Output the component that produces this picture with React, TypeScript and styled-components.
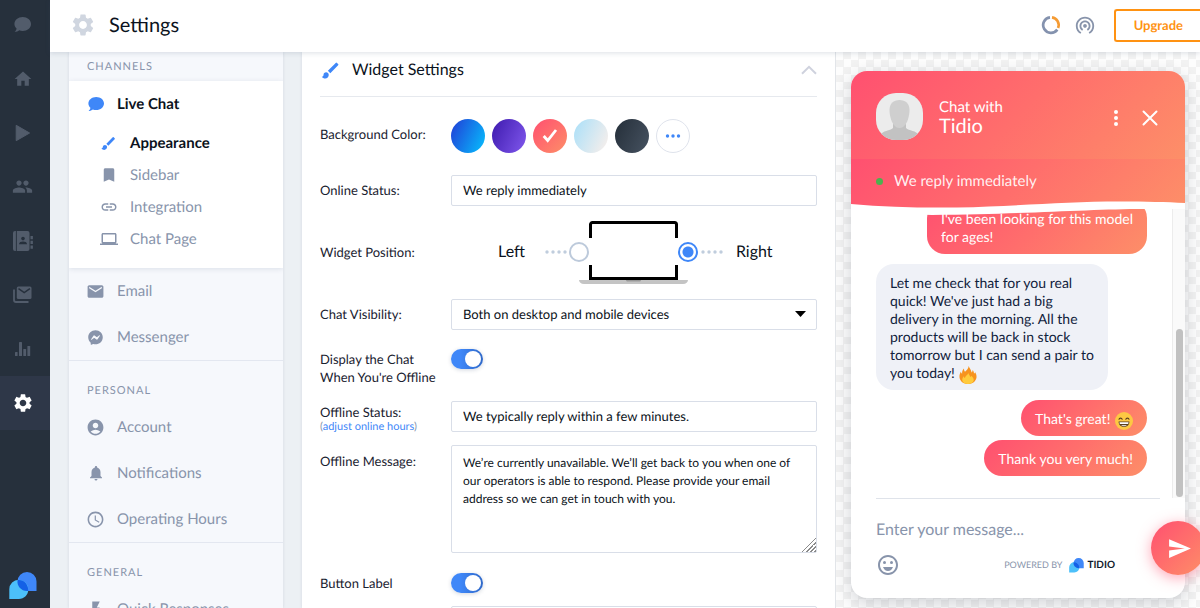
import React, { useState } from 'react';
import styled, { createGlobalStyle, css } from 'styled-components';
import {
  MdHome,
  MdPeople,
  MdSettings,
  MdBrush,
  MdBookmark,
  MdLink,
  MdLaptop,
  MdEmail,
  MdAccountCircle,
  MdNotifications,
  MdAccessTime,
  MdFlashOn,
  MdWifiTethering,
  MdSend,
  MdSentimentVerySatisfied,
} from 'react-icons/md';
import { FaFacebookMessenger } from 'react-icons/fa';

const color = {
  ink: '#0b1220',
  text: '#1a2230',
  muted: '#8894ab',
  blue: '#3f87f8',
  line: '#d9dee8',
  rail: '#26303c',
  railActive: '#2e3748',
  railIcon: '#525c6b',
  page: '#ecf0f4',
  orange: '#ff9212',
};
const coral = 'linear-gradient(135deg, #ff5070 0%, #ff6e6c 50%, #fd8f68 100%)';

const GlobalStyle = createGlobalStyle`
  *, *::before, *::after { box-sizing: border-box; }
  body {
    margin: 0;
    background: ${color.page};
    color: ${color.ink};
    font-family: Lato, "Liberation Sans", sans-serif;
    text-rendering: geometricPrecision;
    overflow: hidden;
  }
  button, input, select, textarea {
    font: inherit;
    color: inherit;
    text-rendering: inherit;
  }
  button { cursor: pointer; }
`;

/* ---------- Shell ---------- */

const Shell = styled.div`
  display: flex;
  height: 100vh;
  overflow: hidden;
`;

const Rail = styled.nav`
  display: flex;
  flex-direction: column;
  flex: 0 0 50px;
  background: ${color.rail};
`;

const RailList = styled.div`
  flex: 1;
  margin-top: -2px;
`;

const RailLink = styled.a<{ $active?: boolean }>`
  display: flex;
  align-items: center;
  justify-content: center;
  height: 54px;
  padding: 0 5px 1px 0;
  color: ${p => (p.$active ? '#fff' : color.railIcon)};
  background: ${p => (p.$active ? color.railActive : 'transparent')};
`;

const RailLogo = styled.a`
  display: flex;
  padding: 0 0 8px 9px;
`;

const Main = styled.div`
  display: flex;
  flex: 1;
  flex-direction: column;
  min-width: 0;
`;

const TopBar = styled.header`
  position: relative;
  z-index: 2;
  display: flex;
  align-items: center;
  flex: 0 0 52px;
  padding: 0 0 2px 20px;
  background: #fff;
  box-shadow: 0 1px 5px rgba(60, 75, 110, 0.18);
`;

const PageTitle = styled.h1`
  flex: 1;
  margin: 0 0 0 13px;
  font-size: 20px;
  line-height: 24px;
  font-weight: 400;
`;

const IconButton = styled.button`
  display: flex;
  padding: 0;
  border: 0;
  background: none;
  color: ${color.muted};
`;

const TopActions = styled.div`
  display: flex;
  align-items: center;
  gap: 13px;
`;

const UpgradeButton = styled.button`
  height: 33px;
  margin-left: 5px;
  padding: 0 17px 0 18px;
  border: 2px solid ${color.orange};
  border-right: 0;
  border-radius: 3px 0 0 3px;
  background: #fff;
  color: ${color.orange};
  font-size: 13px;
  font-weight: 700;
`;

const Content = styled.div`
  display: flex;
  flex: 1;
  min-height: 0;
  padding-left: 19px;
`;

/* ---------- Channel menu ---------- */

const Menu = styled.aside`
  flex: 0 0 214px;
  margin-right: 19px;
  overflow: hidden;
  background: #f6f8fc;
  box-shadow: 0 0 3px rgba(60, 75, 110, 0.14);
`;

const MenuGroup = styled.section`
  border-bottom: 1px solid #e3e7f0;
`;

const MenuTitle = styled.h2<{ $first?: boolean }>`
  margin: 0;
  padding: ${p => (p.$first ? '8px 18px 7px' : '23px 18px 6px')};
  color: ${color.muted};
  font-size: 11px;
  line-height: 14px;
  font-weight: 400;
  letter-spacing: 1px;
`;

const MenuOpen = styled.div`
  padding-bottom: 13px;
  background: #fff;
  box-shadow: 0 1px 5px rgba(60, 75, 110, 0.14);
`;

const MenuLink = styled.a<{ $sub?: boolean; $active?: boolean }>`
  display: flex;
  align-items: center;
  height: ${p => (p.$sub ? '32px' : '46px')};
  padding-left: ${p => (p.$sub ? '30px' : '17px')};
  gap: 12px;
  color: ${p => (p.$active ? color.ink : color.muted)};
  font-size: 15px;
  line-height: 20px;
  font-weight: ${p => (p.$active ? 700 : 400)};
  text-decoration: none;
  white-space: nowrap;

  svg {
    flex: none;
    color: ${p => (p.$active ? color.blue : color.muted)};
  }
`;

const IconSlot = styled.span`
  display: flex;
  justify-content: center;
  flex: 0 0 19px;
`;

/* ---------- Settings form ---------- */

const Panel = styled.main`
  flex: 1;
  min-width: 0;
  padding: 0 18px;
  overflow: hidden;
  background: #fff;
  box-shadow: 0 0 3px rgba(60, 75, 110, 0.14);
`;

const PanelHead = styled.div`
  display: flex;
  align-items: center;
  height: 45px;
  padding-bottom: 8px;
  border-bottom: 1px solid #e6e9ee;
`;

const PanelTitle = styled.h2`
  flex: 1;
  margin: 0 0 0 11px;
  font-size: 16px;
  line-height: 20px;
  font-weight: 400;
`;

const Row = styled.div<{ $gap: number }>`
  display: grid;
  grid-template-columns: 131px 1fr;
  align-items: start;
  margin-top: ${p => p.$gap}px;
`;

const Label = styled.label<{ $top: number }>`
  display: block;
  padding-top: ${p => p.$top}px;
  color: ${color.text};
  font-size: 13px;
  line-height: 18px;
  white-space: pre-line;
`;

const LabelNote = styled.div`
  color: ${color.muted};
  font-size: 11px;
  line-height: 12px;

  a {
    color: ${color.blue};
    text-decoration: none;
  }
`;

const Swatches = styled.div`
  display: flex;
  gap: 7px;
`;

const Swatch = styled.button<{ $fill?: string }>`
  display: flex;
  align-items: center;
  justify-content: center;
  width: 34px;
  height: 34px;
  padding: 0;
  border: ${p => (p.$fill ? '0' : '1px solid #dfe3ec')};
  border-radius: 50%;
  background: ${p => p.$fill ?? '#fff'};
`;

const field = css`
  display: block;
  width: 100%;
  border: 1px solid ${color.line};
  border-radius: 2px;
  background: #fff;
  color: ${color.ink};
  font-size: 13px;
  line-height: 18px;
  outline: none;
`;

const TextInput = styled.input`
  ${field}
  height: 31px;
  padding: 0 11px 1px;
`;

const TextArea = styled.textarea`
  ${field}
  height: 108px;
  padding: 8px 11px;
  font-size: 12px;
  resize: vertical;

  &::-webkit-resizer {
    background: linear-gradient(
      135deg,
      transparent 50%,
      #8a8a8a 50%, #8a8a8a 56%, transparent 56%, transparent 64%,
      #8a8a8a 64%, #8a8a8a 70%, transparent 70%, transparent 78%,
      #8a8a8a 78%, #8a8a8a 84%, transparent 84%, transparent 92%,
      #8a8a8a 92%
    );
  }
`;

const SelectWrap = styled.div`
  position: relative;

  svg {
    position: absolute;
    top: 12px;
    right: 11px;
    pointer-events: none;
  }
`;

const Select = styled.select`
  ${field}
  height: 31px;
  padding: 0 11px 1px;
  appearance: none;
`;

const Toggle = styled.input`
  display: flex;
  align-items: center;
  justify-content: flex-end;
  width: 32px;
  height: 20px;
  margin: 0;
  padding: 0 2px;
  appearance: none;
  border-radius: 10px;
  background: linear-gradient(90deg, #3f87f8 30%, #2f68c8 100%);
  box-shadow: 0 1px 4px rgba(30, 50, 90, 0.2);
  cursor: pointer;

  &::before {
    content: '';
    width: 16px;
    height: 16px;
    border-radius: 50%;
    background: #fff;
  }

  &:not(:checked) {
    justify-content: flex-start;
    background: #c3cddb;
  }
`;

const Position = styled.div`
  display: flex;
  align-items: center;
  height: 63px;
  padding-left: 47px;
`;

const Side = styled.label`
  display: flex;
  align-items: center;
  padding-bottom: 2px;
  font-size: 16px;
  line-height: 20px;
`;

const Dots = styled.svg<{ $side: 'left' | 'right' }>`
  margin: ${p => (p.$side === 'left' ? '0 2px 0 20px' : '0 13px 0 3px')};
`;

const Radio = styled.input`
  width: 20px;
  height: 20px;
  margin: 0;
  appearance: none;
  border: 2px solid #bdcadb;
  border-radius: 50%;
  background: #fff;

  &:checked {
    border-color: ${color.blue};
    background: radial-gradient(circle, ${color.blue} 5px, #fff 6px);
  }
`;

const LaptopArt = styled.svg`
  overflow: visible;
`;

/* ---------- Chat preview ---------- */

const Preview = styled.section`
  flex: 0 0 365px;
  padding: 19px 15px 10px;
  overflow: hidden;
  border-left: 1px solid #e2e5e9;
  background: repeating-conic-gradient(#f2f2f2 0 25%, #fdfdfd 0 50%) 0 0 / 15px 15px;
`;

const Widget = styled.div`
  position: relative;
  display: flex;
  flex-direction: column;
  height: 100%;
  border-radius: 16px;
  background: #fff;
  box-shadow: 0 5px 18px rgba(30, 40, 60, 0.2);
`;

const ChatHead = styled.div`
  display: flex;
  align-items: center;
  flex: 0 0 88px;
  padding: 2px 27px 0 25px;
  border-radius: 16px 16px 0 0;
  background: ${coral};
  color: #fff;
`;

const Avatar = styled.svg`
  flex: none;
  border-radius: 20px;
`;

const ChatName = styled.div`
  flex: 1;
  padding-top: 2px;
  margin-left: 16px;
  font-size: 15px;
  line-height: 18px;

  strong {
    display: block;
    font-size: 20px;
    line-height: 21px;
    font-weight: 400;
  }
`;

const HeadActions = styled.div`
  display: flex;
  align-items: center;
  gap: 24px;
  padding-top: 4px;
`;

const HeadButton = styled(IconButton)`
  color: #fff;
`;

const ChatStatus = styled.div`
  position: relative;
  display: flex;
  align-items: center;
  flex: 0 0 50px;
  padding: 0 0 6px 25px;
  gap: 11px;
  background: ${coral};
  color: rgba(255, 255, 255, 0.92);
  font-size: 15px;
  line-height: 20px;
`;

const OnlineDot = styled.span`
  width: 7px;
  height: 7px;
  border-radius: 50%;
  background: #4cb14f;
`;

const Wave = styled.svg`
  position: absolute;
  left: 0;
  bottom: -7px;
  z-index: 1;
  width: 100%;
  height: 16px;
`;

const Feed = styled.div`
  display: flex;
  flex: 1;
  min-height: 0;
`;

const Messages = styled.div`
  display: flex;
  flex: 1;
  flex-direction: column;
  justify-content: flex-end;
  padding: 0 25px 22px;
  overflow: hidden;
`;

const Bubble = styled.p<{ $mine?: boolean; $gap?: number }>`
  flex: none;
  align-self: ${p => (p.$mine ? 'flex-end' : 'flex-start')};
  margin: ${p => p.$gap ?? 10}px 0 0;
  padding: 10px 14px 8px;
  border-radius: 18px;
  background: ${p => (p.$mine ? coral : '#eff1f7')};
  color: ${p => (p.$mine ? '#fff' : '#10213c')};
  font-size: 14px;
  line-height: 18px;
  white-space: pre;

  svg {
    margin: -2px 0 -2px 1px;
    vertical-align: -4px;
  }
`;

const ScrollTrack = styled.div`
  display: flex;
  align-items: flex-end;
  flex: 0 0 13px;
  padding: 0 2px 1px 3px;
  border-left: 1px solid #ececec;
  background: #fafafa;
`;

const ScrollThumb = styled.div`
  width: 7px;
  height: 168px;
  border-radius: 4px;
  background: #c1c1c1;
`;

const Compose = styled.div`
  flex: 0 0 100px;
  margin: 0 25px;
  border-top: 1px solid #dfe3ea;
`;

const ComposeInput = styled.input`
  display: block;
  width: 100%;
  height: 24px;
  margin: 18px 0 0;
  padding: 0;
  border: 0;
  outline: none;
  background: none;
  font-size: 16px;
  line-height: 20px;

  &::placeholder {
    color: ${color.muted};
    opacity: 1;
  }
`;

const ComposeFoot = styled.div`
  display: flex;
  align-items: center;
  justify-content: space-between;
  height: 24px;
  margin: 12px 45px 0 0;
`;

const Powered = styled.a`
  display: flex;
  align-items: center;
  gap: 7px;
  color: ${color.muted};
  font-size: 9px;
  line-height: 14px;
  text-decoration: none;

  strong {
    margin-left: -4px;
    color: #0f1a2a;
    font-size: 10px;
  }
`;

const SendButton = styled.button`
  position: absolute;
  right: -20px;
  bottom: 23px;
  display: flex;
  align-items: center;
  justify-content: center;
  width: 54px;
  height: 54px;
  padding: 0 0 0 2px;
  border: 0;
  border-radius: 50%;
  background: ${coral};
  box-shadow: 0 3px 14px rgba(255, 80, 112, 0.5);
  color: #fff;
`;

/* ---------- Drawings ---------- */

const ChatGlyph = ({ width = 16 }: { width?: number }) => (
  <svg width={width} height={Math.round(width * 0.875)} viewBox="0 0 16 14" fill="currentColor">
    <path d="M8.2 0C3.9 0 .4 2.9.4 6.500c0 1.700.8 3.200 2 4.300C2.300 12 1.600 13.100.6 14c1.700 0 3.200-.6 4.300-1.500 1 .4 2.100.6 3.300.6 4.300 0 7.800-2.900 7.800-6.600S12.500 0 8.200 0z" />
  </svg>
);

const PlayGlyph = () => (
  <svg width="16" height="18" viewBox="0 0 16 18" fill="currentColor">
    <path d="M1.200 1.300 14.600 9 1.200 16.700z" stroke="currentColor" strokeWidth="1" strokeLinejoin="round" />
  </svg>
);

const ContactsGlyph = () => (
  <svg width="20" height="20" viewBox="0 0 20 20">
    <rect width="16.500" height="20" rx="2" fill="currentColor" />
    <path d="M3.400 0v20" stroke={color.rail} strokeWidth=".9" />
    <circle cx="10" cy="7.600" r="1.800" fill={color.rail} />
    <path d="M6 13.200c0-2.200 2-2.800 4-2.800s4 .6 4 2.800z" fill={color.rail} />
    <path d="M18.700 5v3.300M18.700 9.700V13M18.700 14.400v3.300" stroke="currentColor" strokeWidth="2.400" />
  </svg>
);

const MailStackGlyph = () => (
  <svg width="19" height="17" viewBox="0 0 19 17">
    <path d="M1 3.500V14a2 2 0 0 0 2 2h12.500" fill="none" stroke="currentColor" strokeWidth="1.800" />
    <rect x="3.800" y=".5" width="14.700" height="12.500" rx="1.500" fill="currentColor" />
    <path d="m5.500 2.600 5.700 4 5.700-4" fill="none" stroke={color.rail} strokeWidth="1.500" />
  </svg>
);

const BarsGlyph = () => (
  <svg width="17" height="14" viewBox="0 0 17 14" fill="currentColor">
    <rect x="1" y="10" width="2.600" height="4" rx=".6" />
    <rect x="5" y="0" width="3" height="14" rx=".6" />
    <rect x="9.300" y="7" width="2.800" height="7" rx=".6" />
    <rect x="13.400" y="4" width="2.800" height="10" rx=".6" />
  </svg>
);

const TidioLogo = ({ size }: { size: number }) => (
  <svg width={size} height={size} viewBox="0 0 28 28">
    <path d="M8.500 9.500a9.500 9.500 0 0 1 19 0V19H18A9.500 9.500 0 0 1 8.500 9.500z" fill="#3f87f8" />
    <path d="M.3 17.300a9.500 9.500 0 0 1 19 0c0 5.600-4 9.700-9.500 9.700H.3z" fill="#4cc0fa" />
    <path d="M8.600 8c6-.9 10.800 3.700 10.700 11H18C12.200 19 7.500 14 8.600 8z" fill="#1460e6" />
  </svg>
);

const UsageGlyph = () => (
  <svg width="20" height="20" viewBox="0 0 20 20" fill="none" strokeWidth="2.700">
    <path d="M9 2.300a7.800 7.800 0 1 0 7.300 12.300" stroke="#8492ae" />
    <path d="M11 2.300a7.800 7.800 0 0 1 6.100 10.600" stroke="#f59b33" />
  </svg>
);

const DotRow = () => (
  <>
    {[2, 8, 14, 20].map(x => (
      <circle key={x} cx={x} cy="2" r="1.700" fill="#c0cddd" />
    ))}
  </>
);

const FireEmoji = () => (
  <svg width="18" height="18" viewBox="0 0 18 18">
    <path d="M9.700 0c.5 2.300 2.700 3.700 2.900 6.500.8-.6 1-1.500.9-2.400 1.200 1 1.400 2.200 1.500 3.400.8-.2 1-.9 1-1.600 1 1.400 1.800 3.400 1.500 5.600C17 15.300 13.500 18 9 18S1 15.300.5 11.500C.2 9 1 7 2 5.500c0 1 .3 1.900 1.100 2.200C3 5.500 3.600 3.600 5 2.500c0 1.300.2 2.500 1 3.200C7.800 4.300 9.400 2.600 9.700 0z" fill="#f7931e" />
    <path d="M9.300 7c.3 1.600 1.900 2.400 1.900 4.100.6-.3.9-.8.9-1.400 1.700 1.500 3 2.900 2.600 4.900C14.200 16.700 12 18 9 18s-5.300-1.300-5.700-3.500c-.3-1.900.7-3.100 1.500-4.200.1.900.4 1.500 1.100 1.700C6 9.900 8.700 9.200 9.300 7z" fill="#ffcb3d" />
  </svg>
);

const GrinEmoji = () => (
  <svg width="18" height="18" viewBox="0 0 18 18">
    <circle cx="9" cy="9" r="9" fill="#fdc843" />
    <path d="M4 7.300c.3-1.600 2.800-1.600 3.200 0M10.800 7.300c.4-1.600 2.900-1.600 3.200 0" fill="none" stroke="#5c4020" strokeWidth="1.100" strokeLinecap="round" />
    <path d="M3.600 9.600h10.800c0 3.400-2.200 5.400-5.400 5.400s-5.400-2-5.400-5.400z" fill="#5c4020" />
    <path d="M4.500 10.300h9c0 .8-.1 1.200-.4 1.700H4.900c-.3-.5-.4-.9-.4-1.700zM6 13.200h6c-.8.700-1.800 1-3 1s-2.200-.3-3-1z" fill="#fff" />
  </svg>
);

const PersonAvatar = () => (
  <Avatar width="47" height="47" viewBox="0 0 47 47">
    <rect width="47" height="47" fill="#ececec" />
    <path d="M17 30h13v5c3 3 10 2 14 8v4H3v-4c4-6 11-5 14-8z" fill="#c2c2c2" />
    <path d="M23.500 7c6 0 10 3.500 10 10 0 5-1.500 11-4 14.500-1.800 2.500-3.700 3.500-6 3.500s-4.200-1-6-3.500c-2.500-3.500-4-9.500-4-14.500 0-6.500 4-10 10-10z" fill="#cfcfcf" />
  </Avatar>
);

/* ---------- Data ---------- */

const railItems = [
  { name: 'Chat', icon: <ChatGlyph width={17} /> },
  { name: 'Home', icon: <MdHome size={20} /> },
  { name: 'Visitors', icon: <PlayGlyph /> },
  { name: 'People', icon: <MdPeople size={21} /> },
  { name: 'Contacts', icon: <ContactsGlyph /> },
  { name: 'Mailing', icon: <MailStackGlyph /> },
  { name: 'Analytics', icon: <BarsGlyph /> },
  { name: 'Settings', icon: <MdSettings size={22} />, active: true },
];

const liveChatItems = [
  { name: 'Appearance', icon: <MdBrush size={17} />, active: true },
  { name: 'Sidebar', icon: <MdBookmark size={18} /> },
  { name: 'Integration', icon: <MdLink size={18} /> },
  { name: 'Chat Page', icon: <MdLaptop size={18} /> },
];

const channelItems = [
  { name: 'Email', icon: <MdEmail size={19} /> },
  { name: 'Messenger', icon: <FaFacebookMessenger size={15} /> },
];

const personalItems = [
  { name: 'Account', icon: <MdAccountCircle size={19} /> },
  { name: 'Notifications', icon: <MdNotifications size={18} /> },
  { name: 'Operating Hours', icon: <MdAccessTime size={19} /> },
];

const swatches = [
  { name: 'Blue', fill: 'linear-gradient(115deg, #2042d8 5%, #08b4fa 90%)' },
  { name: 'Purple', fill: 'linear-gradient(115deg, #4420b4 10%, #7d55ea 95%)' },
  { name: 'Coral', fill: coral },
  { name: 'Ice', fill: 'linear-gradient(115deg, #ade0f8 5%, #f3eeec 90%)' },
  { name: 'Graphite', fill: 'linear-gradient(115deg, #28323d 10%, #45515f 95%)' },
];

type Item = { name: string; icon: React.ReactNode; active?: boolean };

const Links = ({ items, sub }: { items: Item[]; sub?: boolean }) => (
  <>
    {items.map(item => (
      <MenuLink key={item.name} href="#" $sub={sub} $active={item.active}>
        <IconSlot>{item.icon}</IconSlot>
        {item.name}
      </MenuLink>
    ))}
  </>
);

/* ---------- Sections ---------- */

const ChannelMenu = () => (
  <Menu>
    <MenuGroup>
      <MenuTitle $first>CHANNELS</MenuTitle>
      <MenuOpen>
        <Links items={[{ name: 'Live Chat', icon: <ChatGlyph />, active: true }]} />
        <Links items={liveChatItems} sub />
      </MenuOpen>
      <Links items={channelItems} />
    </MenuGroup>
    <MenuGroup>
      <MenuTitle>PERSONAL</MenuTitle>
      <Links items={personalItems} />
    </MenuGroup>
    <MenuGroup>
      <MenuTitle>GENERAL</MenuTitle>
      <Links items={[{ name: 'Quick Responses', icon: <MdFlashOn size={18} /> }]} />
    </MenuGroup>
  </Menu>
);

const WidgetSettings = () => {
  const [picked, setPicked] = useState('Coral');
  return (
    <Panel>
      <PanelHead>
        <MdBrush size={21} color={color.blue} />
        <PanelTitle>Widget Settings</PanelTitle>
        <IconButton aria-label="Collapse">
          <svg width="16" height="10" viewBox="0 0 16 10" fill="none" stroke="#cfd2de" strokeWidth="2">
            <path d="m1 8.800 7-7 7 7" />
          </svg>
        </IconButton>
      </PanelHead>

      <Row $gap={22}>
        <Label as="span" $top={6}>Background Color:</Label>
        <Swatches>
          {swatches.map(s => (
            <Swatch key={s.name} $fill={s.fill} aria-label={s.name} onClick={() => setPicked(s.name)}>
              {picked === s.name && (
                <svg width="16" height="14" viewBox="0 0 16 14" fill="none" stroke="#fff" strokeWidth="2.800">
                  <path d="m1.700 7 4 4.500L14 1" />
                </svg>
              )}
            </Swatch>
          ))}
          <Swatch aria-label="More colors">
            <svg width="16" height="4" viewBox="0 0 16 4" fill={color.blue}>
              <circle cx="2.500" cy="2" r="1.700" />
              <circle cx="8" cy="2" r="1.700" />
              <circle cx="13.500" cy="2" r="1.700" />
            </svg>
          </Swatch>
        </Swatches>
      </Row>

      <Row $gap={22}>
        <Label $top={6} htmlFor="online">Online Status:</Label>
        <TextInput id="online" defaultValue="We reply immediately" />
      </Row>

      <Row $gap={15}>
        <Label as="span" $top={22}>Widget Position:</Label>
        <Position>
          <Side>
            Left
            <Dots $side="left" width="22" height="4"><DotRow /></Dots>
            <Radio type="radio" name="position" />
          </Side>
          <LaptopArt width="89" height="63" viewBox="0 0 89 63">
            <path d="M1.500 17V3.500a2 2 0 0 1 2-2h82a2 2 0 0 1 2 2V17" fill="none" stroke="#000" strokeWidth="3" />
            <path d="M1.500 44v13.500h86V44" fill="none" stroke="#000" strokeWidth="3" />
            <path d="M-10 59H99c0 2-2 4-5 4H-5c-3 0-5-2-5-4z" fill="#c4c4c4" />
            <path d="M37 59h15c0 1-1 1.500-2 1.500H39c-1 0-2-.5-2-1.500z" fill="#999" />
          </LaptopArt>
          <Side>
            <Radio type="radio" name="position" defaultChecked />
            <Dots $side="right" width="22" height="4"><DotRow /></Dots>
            Right
          </Side>
        </Position>
      </Row>

      <Row $gap={15}>
        <Label $top={6} htmlFor="visibility">Chat Visibility:</Label>
        <SelectWrap>
          <Select id="visibility">
            <option>Both on desktop and mobile devices</option>
          </Select>
          <svg width="11" height="6" viewBox="0 0 11 6"><path d="M0 0h11L5.500 6z" fill="#000" /></svg>
        </SelectWrap>
      </Row>

      <Row $gap={19}>
        <Label $top={1} htmlFor="display">{"Display the Chat\nWhen You're Offline"}</Label>
        <Toggle id="display" type="checkbox" defaultChecked />
      </Row>

      <Row $gap={15}>
        <div>
          <Label $top={2} htmlFor="offline">Offline Status:</Label>
          <LabelNote>(<a href="#">adjust online hours</a>)</LabelNote>
        </div>
        <TextInput id="offline" defaultValue="We typically reply within a few minutes." />
      </Row>

      <Row $gap={12}>
        <Label $top={7} htmlFor="message">Offline Message:</Label>
        <TextArea
          id="message"
          defaultValue="We’re currently unavailable. We’ll get back to you when one of our operators is able to respond. Please provide your email address so we can get in touch with you."
        />
      </Row>

      <Row $gap={20}>
        <Label $top={1} htmlFor="button-label">Button Label</Label>
        <Toggle id="button-label" type="checkbox" defaultChecked />
      </Row>

      <Row $gap={13}>
        <span />
        <TextInput aria-label="Button label text" />
      </Row>
    </Panel>
  );
};

const ChatPreview = () => (
  <Preview>
    <Widget>
      <ChatHead>
        <PersonAvatar />
        <ChatName>
          Chat with
          <strong>Tidio</strong>
        </ChatName>
        <HeadActions>
          <HeadButton aria-label="More">
            <svg width="4" height="16" viewBox="0 0 4 16" fill="currentColor">
              <circle cx="2" cy="2" r="2" />
              <circle cx="2" cy="8" r="2" />
              <circle cx="2" cy="14" r="2" />
            </svg>
          </HeadButton>
          <HeadButton aria-label="Close">
            <svg width="16" height="16" viewBox="0 0 16 16" stroke="currentColor" strokeWidth="2" strokeLinecap="round">
              <path d="m1.500 1.500 13 13M14.500 1.500l-13 13" />
            </svg>
          </HeadButton>
        </HeadActions>
      </ChatHead>
      <ChatStatus>
        <OnlineDot />
        We reply immediately
        <Wave viewBox="0 0 334 16" preserveAspectRatio="none">
          <path d="M0 4C35 7 70 8 106 7.500 170 6 215 1.500 269 1.500c26 0 46 .5 65 1.500v6h-42C240 9 180 14 81 15L0 12z" fill="#fff" />
        </Wave>
      </ChatStatus>
      <Feed>
        <Messages>
          <Bubble $mine>{"I've been looking for this model\nfor ages!"}</Bubble>
          <Bubble>
            {"Let me check that for you real\nquick! We've just had a big\ndelivery in the morning. All the\nproducts will be back in stock\ntomorrow but I can send a pair to\nyou today! "}
            <FireEmoji />
          </Bubble>
          <Bubble $mine>
            {"That's great! "}
            <GrinEmoji />
          </Bubble>
          <Bubble $mine $gap={4}>Thank you very much!</Bubble>
        </Messages>
        <ScrollTrack>
          <ScrollThumb />
        </ScrollTrack>
      </Feed>
      <Compose>
        <ComposeInput aria-label="Message" placeholder="Enter your message..." />
        <ComposeFoot>
          <IconButton aria-label="Emoji">
            <MdSentimentVerySatisfied size={24} />
          </IconButton>
          <Powered href="#">
            POWERED BY
            <TidioLogo size={15} />
            <strong>TIDIO</strong>
          </Powered>
        </ComposeFoot>
      </Compose>
      <SendButton aria-label="Send">
        <MdSend size={25} />
      </SendButton>
    </Widget>
  </Preview>
);

export default function App() {
  return (
    <Shell>
      <GlobalStyle />
      <Rail>
        <RailList>
          {railItems.map(item => (
            <RailLink key={item.name} href="#" aria-label={item.name} $active={item.active}>
              {item.icon}
            </RailLink>
          ))}
        </RailList>
        <RailLogo href="#" aria-label="Tidio">
          <TidioLogo size={28} />
        </RailLogo>
      </Rail>
      <Main>
        <TopBar>
          <MdSettings size={26} color="#d0d6e0" />
          <PageTitle>Settings</PageTitle>
          <TopActions>
            <IconButton aria-label="Usage"><UsageGlyph /></IconButton>
            <IconButton aria-label="Live visitors"><MdWifiTethering size={22} /></IconButton>
            <UpgradeButton>Upgrade</UpgradeButton>
          </TopActions>
        </TopBar>
        <Content>
          <ChannelMenu />
          <WidgetSettings />
          <ChatPreview />
        </Content>
      </Main>
    </Shell>
  );
}
